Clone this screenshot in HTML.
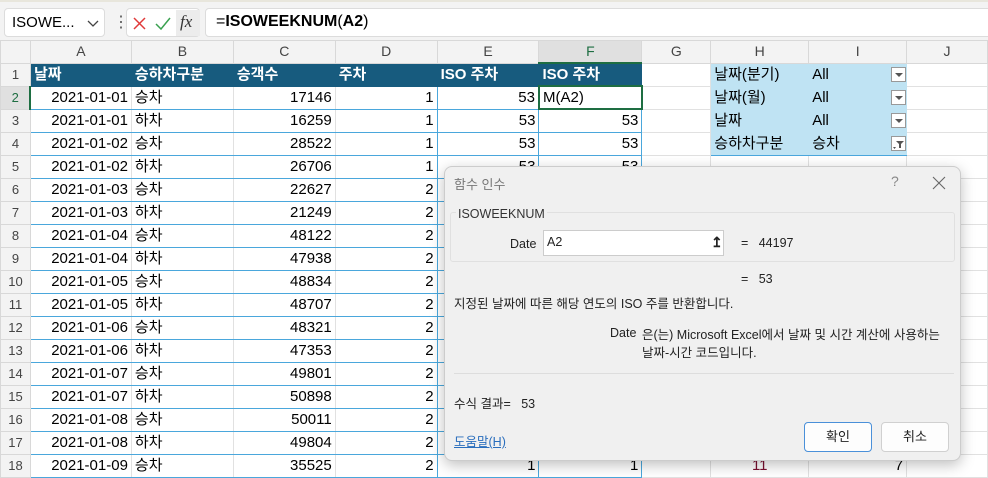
<!DOCTYPE html>
<html><head><meta charset="utf-8"><style>
*{box-sizing:border-box;margin:0;padding:0}
body{width:988px;height:477px;overflow:hidden;background:#fff;font-family:"Liberation Sans","Noto Sans CJK KR",sans-serif;font-size:15px;color:#000;position:relative}
.top{position:absolute;left:0;top:0;width:988px;height:40px;background:#f3f3f3;border-top:2px solid #e8e6dc}
.box{position:absolute;background:#fff;border:1px solid #dcdcdc;border-radius:4px}
table{position:absolute;left:0;top:40px;border-collapse:collapse;table-layout:fixed}
td{height:23px;border:1px solid #e1e1e1;padding:0 3px;white-space:nowrap;overflow:hidden;line-height:21px}
tr.h td{height:22px;background:#f3f3f3;color:#444;text-align:center;font-size:14px;border-color:#d8d8d8}
td.rh{background:#f3f3f3;color:#444;text-align:center;font-size:13px;border-color:#d8d8d8}
td.hd{background:#175b7e;color:#fff;font-weight:bold;border-color:#175b7e}
td.n{text-align:right}
td.t{border-top:1px solid #4aa7dc;border-bottom:1px solid #4aa7dc}
td.bl{border-right:1px solid #4aa7dc}
td.pv{background:#bfe3f3;border-color:#bfe3f3}
.dd{position:absolute;width:15px;height:15px;border:1px solid #999;background:#fff}
.dd:after{content:"";position:absolute;left:3px;top:5px;border:4px solid transparent;border-top:4px solid #555}
.dlg{position:absolute;left:444px;top:166px;width:517px;height:295px;background:#f0f0f0;border:1px solid #ccc;border-radius:8px;box-shadow:0 4px 14px rgba(0,0,0,.25);font-size:12.5px;color:#222}
.dlg div{position:absolute}
.btn{background:#fdfdfd;border:1px solid #d0d0d0;border-radius:4px;text-align:center;line-height:28px;font-size:13px}
</style></head><body>
<div class="top">
 <div class="box" style="left:4px;top:6px;width:101px;height:29px;font-size:15px;padding:5px 7px">ISOWE...<svg width="12" height="8" style="position:absolute;left:82px;top:11px"><path d="M1 1l5 5 5-5" stroke="#444" fill="none" stroke-width="1.3"/></svg></div>
 <div style="position:absolute;left:113px;top:10px;color:#555;font-size:16px">&#8942;</div>
 <div class="box" style="left:126px;top:6px;width:74px;height:29px">
  <svg width="74" height="29" style="position:absolute;left:0;top:0"><path d="M7 9l11 11M18 9L7 20" stroke="#e03a3a" stroke-width="1.5" fill="none"/><path d="M29 15l5 5 9-11" stroke="#3aa150" stroke-width="1.5" fill="none"/><rect x="49" y="1" width="24" height="26" fill="#ececec"/></svg>
  <span style="position:absolute;left:53px;top:3px;font-family:'Liberation Serif',serif;font-style:italic;font-size:17px;color:#333">fx</span></div>
 <div class="box" style="left:205px;top:6px;width:790px;height:29px;padding:4px 10px;font-size:16px">=<b>ISOWEEKNUM</b>(<b>A2</b>)</div>
</div>
<table>
<colgroup><col style="width:30px"><col style="width:101px"><col style="width:102px"><col style="width:102px"><col style="width:102px"><col style="width:102px"><col style="width:103px"><col style="width:69px"><col style="width:98px"><col style="width:98px"><col style="width:81px"></colgroup>
<tr class="h"><td style="background:#f3f3f3"></td><td>A</td><td>B</td><td>C</td><td>D</td><td>E</td><td style="background:#e0e0e0;border-bottom:2px solid #1e6e42;color:#1e6e42">F</td><td>G</td><td>H</td><td>I</td><td>J</td></tr>
<tr><td class="rh">1</td><td class="hd">날짜</td><td class="hd">승하차구분</td><td class="hd">승객수</td><td class="hd">주차</td><td class="hd" style="border-left:1px solid #4aa7dc">ISO 주차</td><td class="hd" style="border-left:1px solid #4aa7dc">ISO 주차</td><td></td><td class="pv">날짜(분기)</td><td class="pv">All</td><td></td></tr>
<tr><td class="rh" style="color:#1e6e42;background:#e0e0e0">2</td><td class="n t" style="border-left:2px solid #1e6e42">2021-01-01</td><td class="t">승차</td><td class="n t">17146</td><td class="n t bl">1</td><td class="n t bl">53</td><td class="t" style="border:2px solid #1e6e42">M(A2)</td><td></td><td class="pv">날짜(월)</td><td class="pv">All</td><td></td></tr>
<tr><td class="rh">3</td><td class="n t">2021-01-01</td><td class="t">하차</td><td class="n t">16259</td><td class="n t bl">1</td><td class="n t bl">53</td><td class="n t bl">53</td><td></td><td class="pv">날짜</td><td class="pv">All</td><td></td></tr>
<tr><td class="rh">4</td><td class="n t">2021-01-02</td><td class="t">승차</td><td class="n t">28522</td><td class="n t bl">1</td><td class="n t bl">53</td><td class="n t bl">53</td><td></td><td class="pv" style="border-bottom:1px solid #4aa7dc">승하차구분</td><td class="pv" style="border-bottom:1px solid #4aa7dc">승차</td><td></td></tr>
<tr><td class="rh">5</td><td class="n t">2021-01-02</td><td class="t">하차</td><td class="n t">26706</td><td class="n t bl">1</td><td class="n t bl">53</td><td class="n t bl">53</td><td></td><td></td><td></td><td></td></tr>
<tr><td class="rh">6</td><td class="n t">2021-01-03</td><td class="t">승차</td><td class="n t">22627</td><td class="n t bl">2</td><td class="t bl"></td><td class="t bl"></td><td></td><td></td><td></td><td></td></tr>
<tr><td class="rh">7</td><td class="n t">2021-01-03</td><td class="t">하차</td><td class="n t">21249</td><td class="n t bl">2</td><td class="t bl"></td><td class="t bl"></td><td></td><td></td><td></td><td></td></tr>
<tr><td class="rh">8</td><td class="n t">2021-01-04</td><td class="t">승차</td><td class="n t">48122</td><td class="n t bl">2</td><td class="t bl"></td><td class="t bl"></td><td></td><td></td><td></td><td></td></tr>
<tr><td class="rh">9</td><td class="n t">2021-01-04</td><td class="t">하차</td><td class="n t">47938</td><td class="n t bl">2</td><td class="t bl"></td><td class="t bl"></td><td></td><td></td><td></td><td></td></tr>
<tr><td class="rh">10</td><td class="n t">2021-01-05</td><td class="t">승차</td><td class="n t">48834</td><td class="n t bl">2</td><td class="t bl"></td><td class="t bl"></td><td></td><td></td><td></td><td></td></tr>
<tr><td class="rh">11</td><td class="n t">2021-01-05</td><td class="t">하차</td><td class="n t">48707</td><td class="n t bl">2</td><td class="t bl"></td><td class="t bl"></td><td></td><td></td><td></td><td></td></tr>
<tr><td class="rh">12</td><td class="n t">2021-01-06</td><td class="t">승차</td><td class="n t">48321</td><td class="n t bl">2</td><td class="t bl"></td><td class="t bl"></td><td></td><td></td><td></td><td></td></tr>
<tr><td class="rh">13</td><td class="n t">2021-01-06</td><td class="t">하차</td><td class="n t">47353</td><td class="n t bl">2</td><td class="t bl"></td><td class="t bl"></td><td></td><td></td><td></td><td></td></tr>
<tr><td class="rh">14</td><td class="n t">2021-01-07</td><td class="t">승차</td><td class="n t">49801</td><td class="n t bl">2</td><td class="t bl"></td><td class="t bl"></td><td></td><td></td><td></td><td></td></tr>
<tr><td class="rh">15</td><td class="n t">2021-01-07</td><td class="t">하차</td><td class="n t">50898</td><td class="n t bl">2</td><td class="t bl"></td><td class="t bl"></td><td></td><td></td><td></td><td></td></tr>
<tr><td class="rh">16</td><td class="n t">2021-01-08</td><td class="t">승차</td><td class="n t">50011</td><td class="n t bl">2</td><td class="t bl"></td><td class="t bl"></td><td></td><td></td><td></td><td></td></tr>
<tr><td class="rh">17</td><td class="n t">2021-01-08</td><td class="t">하차</td><td class="n t">49804</td><td class="n t bl">2</td><td class="t bl"></td><td class="t bl"></td><td></td><td></td><td></td><td></td></tr>
<tr><td class="rh">18</td><td class="n t">2021-01-09</td><td class="t">승차</td><td class="n t">35525</td><td class="n t bl">2</td><td class="n t bl">1</td><td class="n t bl">1</td><td></td><td style="text-align:center;color:#7a1030">11</td><td class="n">7</td><td></td></tr>
</table>
<div class="dd" style="left:891px;top:67px"></div>
<div class="dd" style="left:891px;top:90px"></div>
<div class="dd" style="left:891px;top:113px"></div>
<div style="position:absolute;left:891px;top:136px;width:15px;height:15px;border:1px solid #999;background:#fff"><svg width="13" height="13" style="position:absolute;left:0;top:0"><path d="M4 4h8l-3 3v4H7V7z" fill="#555"/><path d="M1 10h3l-1.5 2z" fill="#555"/></svg></div>
<div class="dlg">
 <div style="left:9px;top:7px;color:#777;font-size:13px">함수 인수</div>
 <div style="left:446px;top:6px;color:#888;font-size:14px">?</div>
 <svg width="14" height="14" style="position:absolute;left:487px;top:9px"><path d="M1 1l12 12M13 1L1 13" stroke="#666" stroke-width="1.1"/></svg>
 <div style="left:5px;top:45px;width:505px;height:50px;border:1px solid #e0e0e0;border-radius:3px"></div>
 <div style="left:11px;top:40px;background:#f0f0f0;padding:0 2px;color:#333">ISOWEEKNUM</div>
 <div style="left:65px;top:70px">Date</div>
 <div style="left:98px;top:63px;width:181px;height:26px;background:#fff;border:1px solid #ccc;padding:4px 3px">A2</div>
 <div style="left:266px;top:67px;font-size:14px;font-weight:bold">&#8613;</div>
 <div style="left:296px;top:69px">=&nbsp;&nbsp; 44197</div>
 <div style="left:296px;top:105px">=&nbsp;&nbsp; 53</div>
 <div style="left:9px;top:126px">지정된 날짜에 따른 해당 연도의 ISO 주를 반환합니다.</div>
 <div style="left:165px;top:159px">Date</div>
 <div style="left:197px;top:159px;line-height:18px">은(는) Microsoft Excel에서 날짜 및 시간 계산에 사용하는<br>날짜-시간 코드입니다.</div>
 <div style="left:9px;top:206px;width:500px;border-top:1px solid #ddd"></div>
 <div style="left:9px;top:226px">수식 결과=&nbsp;&nbsp; 53</div>
 <div style="left:9px;top:264px;color:#2a6ebd;text-decoration:underline">도움말(H)</div>
 <div class="btn" style="left:359px;top:255px;width:68px;height:30px;border-color:#4a90d9">확인</div>
 <div class="btn" style="left:436px;top:255px;width:68px;height:30px">취소</div>
</div>
</body></html>
